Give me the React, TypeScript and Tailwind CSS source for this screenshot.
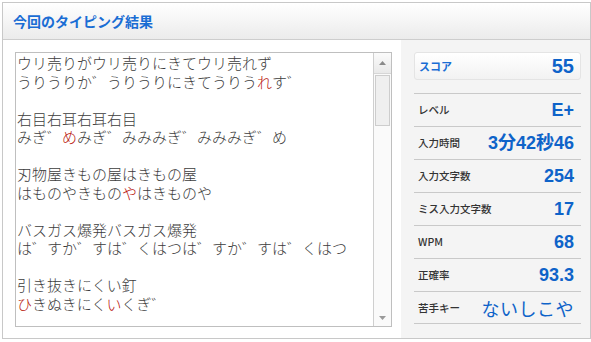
import React from "react";

const jp = { fontFamily: '"Noto Sans CJK JP", "Noto Sans", sans-serif' };
const ar = { fontFamily: '"Liberation Sans", Arial, "Noto Sans CJK JP", sans-serif' };

type Seg = { t: string; r?: boolean };
const lines: Seg[][] = [
  [{ t: "ウリ売りがウリ売りにきてウリ売れず" }],
  [{ t: "うりうりか゛うりうりにきてうりう" }, { t: "れ", r: true }, { t: "す゛" }],
  [],
  [{ t: "右目右耳右耳右目" }],
  [{ t: "みぎ゛" }, { t: "め", r: true }, { t: "みぎ゛みみみぎ゛みみみぎ゛め" }],
  [],
  [{ t: "刃物屋きもの屋はきもの屋" }],
  [{ t: "はものやきもの" }, { t: "や", r: true }, { t: "はきものや" }],
  [],
  [{ t: "バスガス爆発バスガス爆発" }],
  [{ t: "は゛すか゛すは゛くはつは゛すか゛すは゛くはつ" }],
  [],
  [{ t: "引き抜きにくい釘" }],
  [{ t: "ひ", r: true }, { t: "きぬきにく" }, { t: "い", r: true }, { t: "くぎ゛" }],
];

const rows: { label: string; value: string; kana?: boolean }[] = [
  { label: "レベル", value: "E+" },
  { label: "入力時間", value: "3分42秒46" },
  { label: "入力文字数", value: "254" },
  { label: "ミス入力文字数", value: "17" },
  { label: "WPM", value: "68" },
  { label: "正確率", value: "93.3" },
  { label: "苦手キー", value: "ないしこや", kana: true },
];

export default function App() {
  return (
    <div className="w-[591px] h-[342px] bg-white pt-[2px] pl-[2px] overflow-hidden">
      <div className="w-[589px] h-[337px] border border-[#c8c8c8] flex flex-col bg-white">
        <div className="h-[37px] shrink-0 bg-gradient-to-b from-white to-[#ebebeb] border-b border-[#cdcdcd] flex items-center pl-[10px]">
          <span className="text-[14px] font-bold text-[#1a6dd4] leading-none" style={jp}>
            今回のタイピング結果
          </span>
        </div>
        <div className="flex flex-1">
          <div className="w-[398px] pl-[12px] pt-[12px]">
            <div className="w-[377px] h-[275px] border border-[#bfbfbf] flex">
              <div className="flex-1 pl-[1px] pt-[1px] text-[15px] leading-[18.5px] text-[#3c3c3c] font-light" style={jp}>
                {lines.map((l, i) => (
                  <div key={i} className="h-[18.5px] whitespace-nowrap">
                    {l.map((s, j) => (
                      <span key={j} className={s.r ? "text-[#b8140a]" : ""}>
                        {s.t}
                      </span>
                    ))}
                  </div>
                ))}
              </div>
              <div className="w-[18px] border-l border-[#cfcfcf] bg-[#fafafa] flex flex-col">
                <div className="h-[21px] bg-gradient-to-b from-[#fbfbfb] to-[#e9e9e9] border-b border-[#d6d6d6] flex items-center justify-center">
                  <svg width="7" height="4" viewBox="0 0 7 4">
                    <polygon points="0,4 3.5,0 7,4" fill="#8a8a8a" />
                  </svg>
                </div>
                <div className="mx-[1px] mt-[1px] h-[51px] border border-[#cdcdcd] bg-[#efefef]" />
                <div className="flex-1" />
                <div className="h-[17px] flex items-center justify-center">
                  <svg width="7" height="4" viewBox="0 0 7 4">
                    <polygon points="0,0 3.5,4 7,0" fill="#9a9a9a" />
                  </svg>
                </div>
              </div>
            </div>
          </div>
          <div className="flex-1 bg-[#f4f4f4] pl-[13px] pr-[9px] pt-[12px]">
            <div className="h-[28px] rounded-[3px] border border-[#e4e4e4] bg-gradient-to-b from-white to-[#f2f2f2] flex items-center justify-between pl-[4px] pr-[6px]">
              <span className="text-[11px] font-bold text-[#1a6dd4]" style={jp}>スコア</span>
              <span className="text-[20px] font-bold text-[#0e63c9] leading-none" style={ar}>55</span>
            </div>
            <div className="mt-[13px]">
              {rows.map((r, i) => (
                <div
                  key={i}
                  className={
                    "h-[33px] border-t border-[#c9c9c9] flex items-center justify-between pl-[4px] pr-[7px]" +
                    (i === rows.length - 1 ? " border-b" : "")
                  }
                >
                  <span className="text-[10.5px] text-[#333] font-medium" style={jp}>{r.label}</span>
                  {r.kana ? (
                    <span className="text-[18px] text-[#0e63c9] leading-none tracking-[0.5px]" style={jp}>{r.value}</span>
                  ) : (
                    <span className="text-[18px] font-bold text-[#0e63c9] leading-none" style={ar}>{r.value}</span>
                  )}
                </div>
              ))}
            </div>
          </div>
        </div>
      </div>
    </div>
  );
}
